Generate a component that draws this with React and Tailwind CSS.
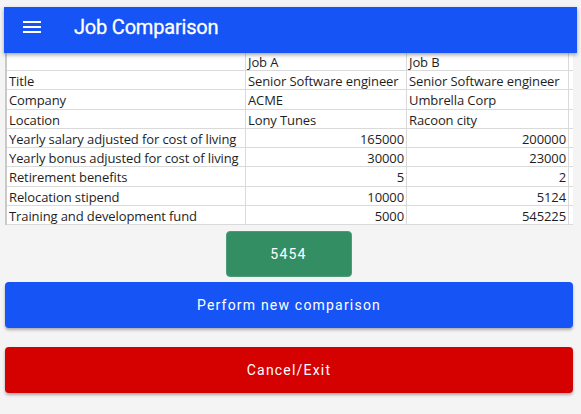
import React from 'react';

const rows = [
    { label: 'Title', a: 'Senior Software engineer', b: 'Senior Software engineer' },
    { label: 'Company', a: 'ACME', b: 'Umbrella Corp' },
    { label: 'Location', a: 'Lony Tunes', b: 'Racoon city' },
    { label: 'Yearly salary adjusted for cost of living', a: '165000', b: '200000', num: true },
    { label: 'Yearly bonus adjusted for cost of living', a: '30000', b: '23000', num: true },
    { label: 'Retirement benefits', a: '5', b: '2', num: true },
    { label: 'Relocation stipend', a: '10000', b: '5124', num: true },
    { label: 'Training and development fund', a: '5000', b: '545225', num: true },
];

function MenuIcon() {
    return (
        <svg width="24" height="24" viewBox="0 0 24 24" fill="white">
            <path d="M3 18h18v-2H3v2zm0-5h18v-2H3v2zm0-7v2h18V6H3z" />
        </svg>
    );
}

export default function App() {
    return (
        <div className="w-[581px] h-[414px] bg-[#f4f4f4] pt-[7px] overflow-hidden" style={{ fontFamily: 'Roboto, "Liberation Sans", sans-serif' }}>

            {/* App bar */}
            <div className="relative z-10 mx-[4px] h-[46px] pb-[7px] bg-[#1654f6] flex items-center shadow-[0_2px_4px_rgba(0,0,0,0.35)]">
                <div className="ml-[16px] w-[24px] h-[24px]">
                    <MenuIcon />
                </div>
                <h1 className="ml-[30px] text-white text-[20px] font-normal tracking-[-0.2px] leading-none [-webkit-text-stroke:0.3px_white]">Job Comparison</h1>
            </div>

            {/* Spreadsheet */}
            <div
                className="ml-[5px] w-[568px] bg-white border-l-2 border-[#c9c9c9] text-[13px] text-[#1e1e1e] tracking-[-0.1px]"
                style={{ fontFamily: '"Open Sans", "Liberation Sans", sans-serif' }}
            >
                <div className="flex h-[18px] border-b border-[#dadada] leading-[18px]">
                    <div className="w-[239px] border-r border-[#dadada]" />
                    <div className="w-[161px] border-r border-[#dadada] px-[2px]">Job A</div>
                    <div className="w-[162px] border-r border-[#dadada] px-[2px]">Job B</div>
                </div>
                {rows.map((r) => (
                    <div key={r.label} className="flex h-[19.25px] border-b border-[#dadada] leading-[20px]">
                        <div className="w-[239px] border-r border-[#dadada] px-[2px] whitespace-nowrap overflow-hidden">{r.label}</div>
                        <div className={`w-[161px] border-r border-[#dadada] px-[2px] whitespace-nowrap overflow-hidden ${r.num ? 'text-right' : ''}`}>{r.a}</div>
                        <div className={`w-[162px] border-r border-[#dadada] px-[2px] whitespace-nowrap overflow-hidden ${r.num ? 'text-right' : ''}`}>{r.b}</div>
                    </div>
                ))}
            </div>

            {/* Result */}
            <div className="flex justify-center mt-[6px]">
                <div className="ml-[-4px] w-[126px] h-[46px] rounded-[4px] bg-[#338f63] border border-[#4c9d77] flex items-center justify-center text-white text-[14px] tracking-[1.2px]">
                    5454
                </div>
            </div>

            <button className="mt-[5px] ml-[5px] w-[568px] h-[46px] rounded-[4px] bg-[#1654f6] text-white text-[14px] font-normal tracking-[1.2px] shadow-[0_2px_3px_rgba(0,0,0,0.3)]">
                Perform new comparison
            </button>

            <button className="mt-[19px] ml-[5px] w-[568px] h-[46px] rounded-[4px] bg-[#d50000] text-white text-[14px] font-normal tracking-[1.2px] shadow-[0_2px_3px_rgba(0,0,0,0.3)]">
                Cancel/Exit
            </button>
        </div>
    );
}
